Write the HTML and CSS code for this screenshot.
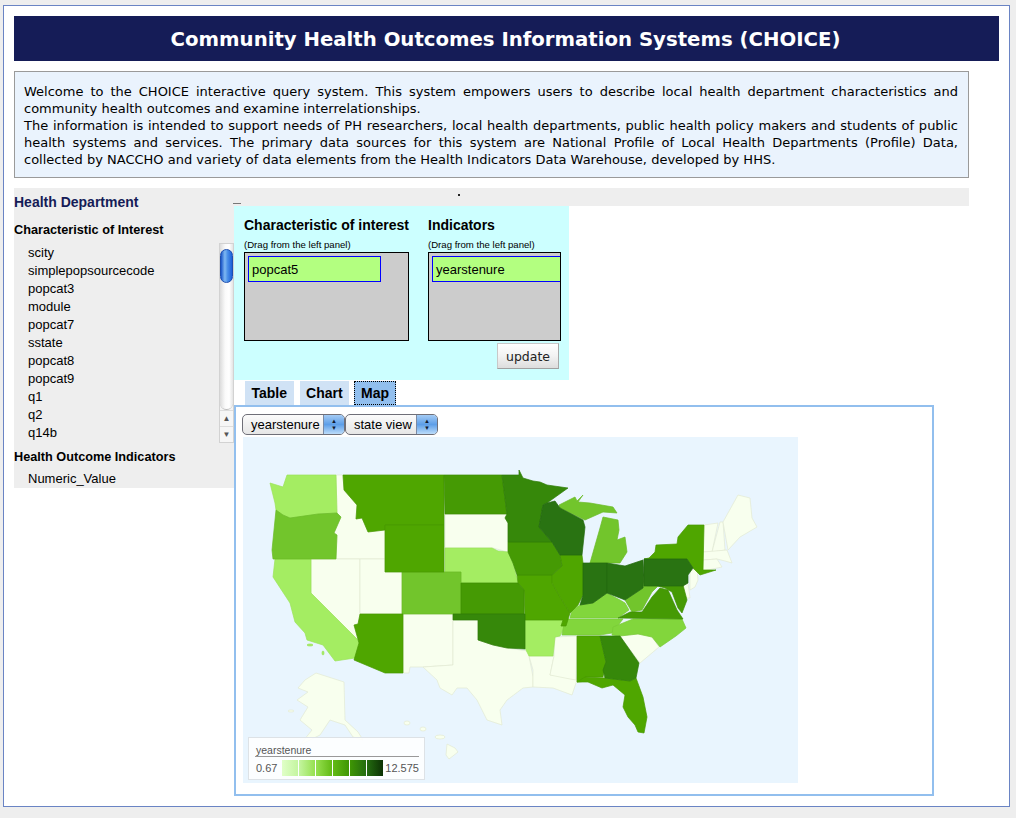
FILE: index.html
```html
<!DOCTYPE html>
<html lang="en">
<head>
    <meta charset="UTF-8">
    <meta name="viewport" content="width=device-width, initial-scale=1.0">
    <title>CHOICE</title>
    <link rel="stylesheet" href="styles.css">
</head>
<body>

<div class="frame">
    <h1 class="title">Community Health Outcomes Information Systems (CHOICE)</h1>

    <div class="intro">
        <p>Welcome to the CHOICE interactive query system. This system empowers users to describe local health department characteristics and community health outcomes and examine interrelationships.</p>
        <p>The information is intended to support needs of PH researchers, local health departments, public health policy makers and students of public health systems and services. The primary data sources for this system are National Profile of Local Health Departments (Profile) Data, collected by NACCHO and variety of data elements from the Health Indicators Data Warehouse, developed by HHS.</p>
    </div>

    <div class="content">
        <div class="side">
            <h2 class="side-title">Health Department</h2>
            <h3 class="side-head">Characteristic of Interest</h3>
            <div class="list-wrap">
                <ul class="var-list">
                    <li>scity</li>
                    <li>simplepopsourcecode</li>
                    <li>popcat3</li>
                    <li>module</li>
                    <li>popcat7</li>
                    <li>sstate</li>
                    <li>popcat8</li>
                    <li>popcat9</li>
                    <li>q1</li>
                    <li>q2</li>
                    <li>q14b</li>
                </ul>
                <div class="scrollbar">
                    <div class="track"><div class="thumb"></div></div>
                    <div class="arrow">&#9650;</div>
                    <div class="arrow">&#9660;</div>
                </div>
            </div>
            <h3 class="side-head second">Health Outcome Indicators</h3>
            <ul class="var-list">
                <li>Numeric_Value</li>
            </ul>
        </div>

        <div class="main">
            <div class="strip"><span class="dash"></span><span class="dot"></span></div>

            <div class="query">
                <div class="drop-cols">
                    <div class="drop-col first">
                        <h4>Characteristic of interest</h4>
                        <small>(Drag from the left panel)</small>
                        <div class="drop-box"><div class="chip short">popcat5</div></div>
                    </div>
                    <div class="drop-col">
                        <h4>Indicators</h4>
                        <small>(Drag from the left panel)</small>
                        <div class="drop-box clip"><div class="chip wide">yearstenure</div></div>
                    </div>
                </div>
                <div class="update-row"><button class="update">update</button></div>
            </div>

            <div class="tabs">
                <span class="tab">Table</span>
                <span class="tab">Chart</span>
                <span class="tab active">Map</span>
            </div>

            <div class="tab-panel">
                <div class="selects">
                    <div class="select one"><span>yearstenure</span><i class="stepper"><b>&#9650;</b><b>&#9660;</b></i></div>
                    <div class="select two"><span>state view</span><i class="stepper"><b>&#9650;</b><b>&#9660;</b></i></div>
                </div>
                <div class="map">
                    <svg class="map-svg" viewBox="243 437 555 346" width="555" height="346">
                        <!-- white states -->
                        <g class="s0">
                            <polygon points="336,475 343,475 344,490 357,505 356,519 362,518 368,532 385,530 385,559 336,559 337,535 334,533 341,517 337,513"/>
                            <polygon points="311,559 360,559 360,614 358,624 354,625 358,640 311,593"/>
                            <polygon points="360,559 385,559 385,572 402,572 402,614 360,614"/>
                            <polygon points="403,614 453,614 453,665 423,667 410,667 409,673 403,673"/>
                            <polygon points="445,514 507,514 505,518 508,523 508,552 493,548 445,548"/>
                            <polygon points="453,620 478,620 478,640 493,645 507,648 528,651 533,677 533,687 523,688 507,700 500,710 502,725 487,720 477,700 467,688 457,688 452,695 440,688 437,680 423,667 453,665"/>
                            <polygon points="529,656 554,656 550,675 575,675 577,680 572,695 553,688 533,687 533,670"/>
                            <polygon points="555,637 577,636 576,680 570,679 550,675 554,656"/>
                            <polygon points="620,636 638,634 652,637 659,647 640,663"/>
                            <polygon points="683,585 688,583 690,598 685,598"/>
                            <polygon points="690,571 697,568 698,580 695,587 690,590"/>
                            <polygon points="704,525 718,523 712,552 703,552"/>
                            <polygon points="720,522 723,522 725,550 712,552"/>
                            <polygon points="738,495 750,498 752,518 757,527 740,537 728,550 723,522"/>
                            <polygon points="703,552 727,550 732,563 725,561 717,559 703,560"/>
                            <polygon points="703,560 717,559 722,567 703,571"/>
                            <polygon points="316,673 344,682 345,720 358,732 363,740 353,737 345,725 330,720 320,735 300,745 312,730 300,720 308,707 297,700 308,692 298,688 305,680"/>
                            <ellipse cx="291" cy="711" rx="3" ry="1"/>
                            <ellipse cx="407" cy="723" rx="3" ry="2"/>
                            <ellipse cx="423" cy="729" rx="3" ry="2"/>
                            <ellipse cx="440" cy="737" rx="5" ry="2"/>
                            <polygon points="447,744 455,748 458,752 449,759 446,755"/>
                        </g>
                        <g class="s1">
                            <polygon points="287,475 336,475 337,513 318,514 300,517 290,518 283,515 276,510 275,503 270,483 283,487"/>
                            <polygon points="275,559 311,559 311,593 358,640 359,643 355,658 335,661 323,645 307,640 305,633 295,622 290,603 273,577"/>
                            <polygon points="445,548 492,548 498,551 508,552 513,563 518,583 461,583 461,572 445,572"/>
                            <polygon points="525,620 563,620 561,626 565,626 560,636 555,637 553,656 529,656 525,648"/>
                            <ellipse cx="310" cy="645" rx="3" ry="1"/>
                            <ellipse cx="323" cy="653" rx="1" ry="2"/>
                        </g>
                        <g class="s2">
                            <polygon points="276,510 283,515 290,518 318,514 337,513 341,517 334,533 337,535 336,559 273,559 272,550"/>
                            <polygon points="402,572 461,572 461,614 402,614"/>
                            <polygon points="559,505 575,497 577,501 583,495 578,502 590,503 613,507 617,513 603,512 585,520 560,508"/>
                            <polygon points="603,517 618,520 619,530 617,540 625,537 627,552 620,563 590,563 600,528"/>
                        </g>
                        <g class="s3">
                            <polygon points="565,619 623,619 612,633 600,635 562,635"/>
                            <polygon points="633,619 682,619 686,628 676,636 660,647 652,637 638,634 620,636 612,635 613,627 623,623"/>
                            <polygon points="607,593 620,600 625,603 629,610 618,618 570,618 572,610 580,605 593,603"/>
                            <polygon class="s2" points="625,600 643,588 644,575 647,586 658,586 652,592 642,610 632,612"/>
                        </g>
                        <g class="s4">
                            <polygon points="343,475 444,475 444,525 385,525 385,530 368,532 362,518 356,519 357,505 344,490"/>
                            <polygon points="385,525 444,525 444,572 385,572"/>
                            <polygon points="360,614 403,614 403,673 385,673 354,660 359,643 354,625 358,624"/>
                            <polygon points="517,575 552,575 552,583 560,597 570,613 566,626 561,626 563,620 525,620 524,590 518,583"/>
                            <polygon points="560,555 582,555 583,563 583,595 578,605 570,613 560,597 552,583 552,575 562,566"/>
                            <polygon points="577,636 600,636 606,662 603,677 585,677 588,681 577,682"/>
                            <polygon points="649,558 655,552 656,545 677,544 678,537 688,525 704,525 703,570 716,570 700,575 693,568 687,559 644,559"/>
                            <polygon points="577,682 585,677 605,678 630,681 636,678 643,697 647,717 644,733 638,732 635,725 628,717 623,707 625,695 613,685 602,688 588,682"/>
                        </g>
                        <g class="s5">
                            <polygon points="444,475 502,475 507,514 445,514"/>
                            <polygon points="461,583 518,583 524,590 524,614 461,614"/>
                            <polygon points="508,542 552,542 560,555 562,566 552,575 517,575 513,563 508,552"/>
                            <polygon points="618,618 630,612 642,612 652,597 660,588 668,590 677,610 683,619"/>
                            <polygon points="658,586 683,585 687,600 682,613 678,608 672,592 665,588"/>
                        </g>
                        <g class="s6">
                            <polygon points="502,475 519,475 519,470 523,478 533,481 540,482 547,485 568,488 547,503 543,505 539,527 552,542 508,542 508,523 505,518 507,514"/>
                            <polygon points="600,636 620,636 639,663 636,678 630,681 605,678 603,670 606,662"/>
                            <polygon points="453,614 525,614 525,649 507,648 493,645 478,640 478,620 453,620"/>
                        </g>
                        <g class="s7">
                            <polygon points="547,503 555,501 560,508 583,520 585,527 582,555 560,555 552,542 539,527 543,505"/>
                            <polygon points="583,563 607,563 607,593 593,603 580,605 583,595"/>
                            <polygon points="607,563 625,566 643,560 644,575 643,588 625,600 620,598 607,593"/>
                            <polygon points="644,559 687,559 693,568 688,575 688,583 683,586 644,586"/>
                        </g>
                    </svg>
                    <div class="legend">
                        <div class="legend-name">yearstenure</div>
                        <div class="legend-row">
                            <span>0.67</span>
                            <div class="ramp">
                                <i class="r1"></i><i class="r2"></i><i class="r3"></i><i class="r4"></i><i class="r5"></i><i class="r6"></i>
                            </div>
                            <span>12.575</span>
                        </div>
                    </div>
                </div>
            </div>
        </div>
    </div>
</div>

</body>
</html>
```

FILE: styles.css
```css
html, body {
    margin: 0;
    padding: 0;
}

body {
    height: 818px;
    overflow: hidden;
    background-color: #eeeeee;
    font-family: "Liberation Sans", Arial, sans-serif;
    color: #000;
}

.frame {
    box-sizing: border-box;
    width: 1007px;
    height: 802px;
    margin: 5px 0 0 3px;
    padding: 10px;
    background-color: #fff;
    border: 1px solid #6a84c4;
}

.title {
    box-sizing: border-box;
    margin: 0 0 10px;
    height: 45px;
    line-height: 47px;
    width: 985px;
    padding-right: 2px;
    background-color: #151c57;
    color: #fff;
    font-family: "DejaVu Sans", Verdana, sans-serif;
    font-size: 19.7px;
    font-weight: bold;
    text-align: center;
}

.intro {
    box-sizing: border-box;
    width: 955px;
    height: 107px;
    padding: 11px 10px 0 9px;
    background-color: #eaf3fd;
    border: 1px solid #9a9a9a;
    font-family: "DejaVu Sans", Verdana, sans-serif;
    font-size: 13px;
    line-height: 17px;
    text-align: justify;
}

.intro p {
    margin: 0;
}

.content {
    display: flex;
    width: 955px;
    margin-top: 10px;
}

/* left panel */
.side {
    box-sizing: border-box;
    flex: 0 0 220px;
    height: 300px;
    background-color: #eeeeee;
}

.side-title {
    margin: 0;
    height: 29px;
    line-height: 29px;
    font-size: 14px;
    font-weight: bold;
    color: #151c57;
}

.side-head {
    margin: 0;
    height: 26px;
    line-height: 27px;
    font-size: 12.7px;
    font-weight: bold;
}

.side-head.second {
    margin-top: 1px;
    height: 25px;
}

.list-wrap {
    display: flex;
    justify-content: space-between;
    height: 200px;
}

.var-list {
    margin: 0;
    padding: 1px 0 0 14px;
    list-style: none;
    font-size: 13px;
    line-height: 18px;
}

.scrollbar {
    box-sizing: border-box;
    display: flex;
    flex-direction: column;
    width: 15px;
    height: 200px;
    background-color: #f4f4f4;
    border: 1px solid #d2d2d2;
}

.track {
    flex: 1;
    padding-top: 5px;
    background: linear-gradient(to right, #dcdcdc, #fafafa 40%, #fff 70%, #e4e4e4);
    border-bottom: 1px solid #bbb;
    border-radius: 0 0 7px 7px;
}

.thumb {
    box-sizing: border-box;
    width: 13px;
    height: 34px;
    background: linear-gradient(to right, #1a55c8, #7fb8f2 35%, #4a8fe8 60%, #1c5fd8);
    border: 1px solid #1d4fb0;
    border-radius: 7px;
}

.arrow {
    height: 15px;
    line-height: 15px;
    font-size: 8px;
    text-align: center;
    color: #555;
    background-color: #f6f6f6;
    border-top: 1px solid #ddd;
}

/* right side */
.main {
    flex: 1;
}

.strip {
    position: relative;
    height: 18px;
    background-color: #eeeeee;
}

.dash {
    position: absolute;
    left: -1px;
    top: 15px;
    width: 8px;
    height: 1px;
    background-color: #777;
}

.dot {
    position: absolute;
    left: 224px;
    top: 6px;
    width: 2px;
    height: 2px;
    background-color: #222;
}

.query {
    box-sizing: border-box;
    width: 335px;
    height: 174px;
    padding: 12px 8px 0 10px;
    background-color: #ccffff;
}

.drop-cols {
    display: flex;
}

.drop-col {
    flex: 0 0 133px;
    min-width: 0;
}

.drop-col.first {
    flex: 0 0 165px;
    margin-right: 19px;
}

.drop-col h4 {
    margin: 0;
    height: 15px;
    line-height: 15px;
    font-size: 14px;
    white-space: nowrap;
}

.drop-col small {
    display: block;
    height: 19px;
    line-height: 23px;
    font-size: 9.6px;
    white-space: nowrap;
}

.drop-box {
    box-sizing: border-box;
    height: 89px;
    padding: 3px;
    overflow: hidden;
    background-color: #cccccc;
    border: 1px solid #000;
}

.drop-box.clip {
    padding-right: 0;
}

.chip {
    box-sizing: border-box;
    height: 26px;
    line-height: 25px;
    padding-left: 3px;
    font-size: 13px;
    background-color: #b3ff80;
    border: 1px solid #0000ff;
}

.chip.short {
    width: 133px;
}

.chip.wide {
    width: 140px;
}

.update-row {
    display: flex;
    justify-content: flex-end;
    padding: 2px 2px 0 0;
}

.update {
    width: 62px;
    height: 26px;
    padding: 0;
    font-family: "DejaVu Sans", Verdana, sans-serif;
    font-size: 12.5px;
    color: #222;
    background: linear-gradient(to bottom, #fff, #f2f2f2 50%, #dddddd);
    border: 1px solid #c8c8c8;
    border-right-color: #a8a8a8;
    border-bottom-color: #a0a0a0;
}

.tabs {
    display: flex;
    gap: 6px;
    height: 25px;
    padding: 1px 0 0 11px;
    box-sizing: border-box;
}

.tab {
    padding: 0 6.5px;
    height: 24px;
    line-height: 25px;
    font-size: 14px;
    font-weight: bold;
    background-color: #d0e2f5;
}

.tab.active {
    padding: 0 7px;
    margin-left: -1px;
    background-color: #92bfee;
    outline: 1px dotted #000;
    outline-offset: -1px;
}

.tab-panel {
    box-sizing: border-box;
    width: 700px;
    height: 391px;
    padding: 7px 8px 0 7px;
    border: 2px solid #92bfee;
}

.selects {
    display: flex;
    height: 23px;
    margin-left: -1px;
}

.select {
    box-sizing: border-box;
    display: flex;
    justify-content: space-between;
    height: 21px;
    line-height: 20px;
    padding-left: 8px;
    font-size: 13px;
    background: linear-gradient(to bottom, #fbfbfb, #e6e6e6);
    border: 1px solid #6f6f78;
    border-radius: 5px;
    overflow: hidden;
}

.select.one {
    width: 103px;
}

.select.two {
    width: 93px;
}

.stepper {
    display: flex;
    flex-direction: column;
    justify-content: center;
    width: 20px;
    background: linear-gradient(to bottom, #a4cbf4, #5d9ee8 50%, #bcdcfa);
    border-left: 1px solid #7a8aa4;
}

.stepper b {
    height: 7px;
    line-height: 7px;
    font-size: 6px;
    font-style: normal;
    text-align: center;
    color: #101a30;
}

/* map */
.map {
    position: relative;
    width: 555px;
    height: 346px;
    background-color: #e9f5fe;
}

.map-svg {
    display: block;
}

.map-svg polygon,
.map-svg ellipse {
    stroke-width: 0.7;
    stroke-linejoin: round;
}

.s0 { fill: #f8ffee; stroke: #e2ead2; }
.s1 { fill: #a4ed62; stroke: #9be259; }
.s2 { fill: #72c52c; stroke: #6aba27; }
.s3 { fill: #82d63c; stroke: #78ca35; }
.s4 { fill: #4fa600; stroke: #479a00; }
.s5 { fill: #459a04; stroke: #3e8e04; }
.s6 { fill: #36880a; stroke: #2f7c09; }
.s7 { fill: #297312; stroke: #246810; }

.legend {
    box-sizing: border-box;
    position: absolute;
    left: 5px;
    top: 300px;
    width: 177px;
    height: 43px;
    padding: 6px 5px 0 6px;
    background-color: rgba(255, 255, 255, 0.85);
    border: 1px solid #dde2e6;
    font-size: 11px;
    color: #555;
}

.legend-name {
    height: 12px;
    line-height: 12px;
    border-bottom: 1px solid #999;
    padding-left: 1px;
    font-size: 10.5px;
}

.legend-row {
    display: flex;
    align-items: center;
    justify-content: space-between;
    height: 20px;
    padding: 0 0 0 1px;
    margin-top: 1px;
}

.ramp {
    display: flex;
    gap: 1px;
    height: 16px;
    margin-left: 2px;
}

.ramp i {
    display: block;
    width: 16px;
    height: 16px;
}

.r1 { background: linear-gradient(to right, #e0ffc8, #c4f5a0); }
.r2 { background: linear-gradient(to right, #c4f5a0, #96e050); }
.r3 { background: linear-gradient(to right, #96e050, #62ba14); }
.r4 { background: linear-gradient(to right, #62ba14, #3f9604); }
.r5 { background: linear-gradient(to right, #3f9604, #246c10); }
.r6 { background: linear-gradient(to right, #246c10, #0c3204); }
```
